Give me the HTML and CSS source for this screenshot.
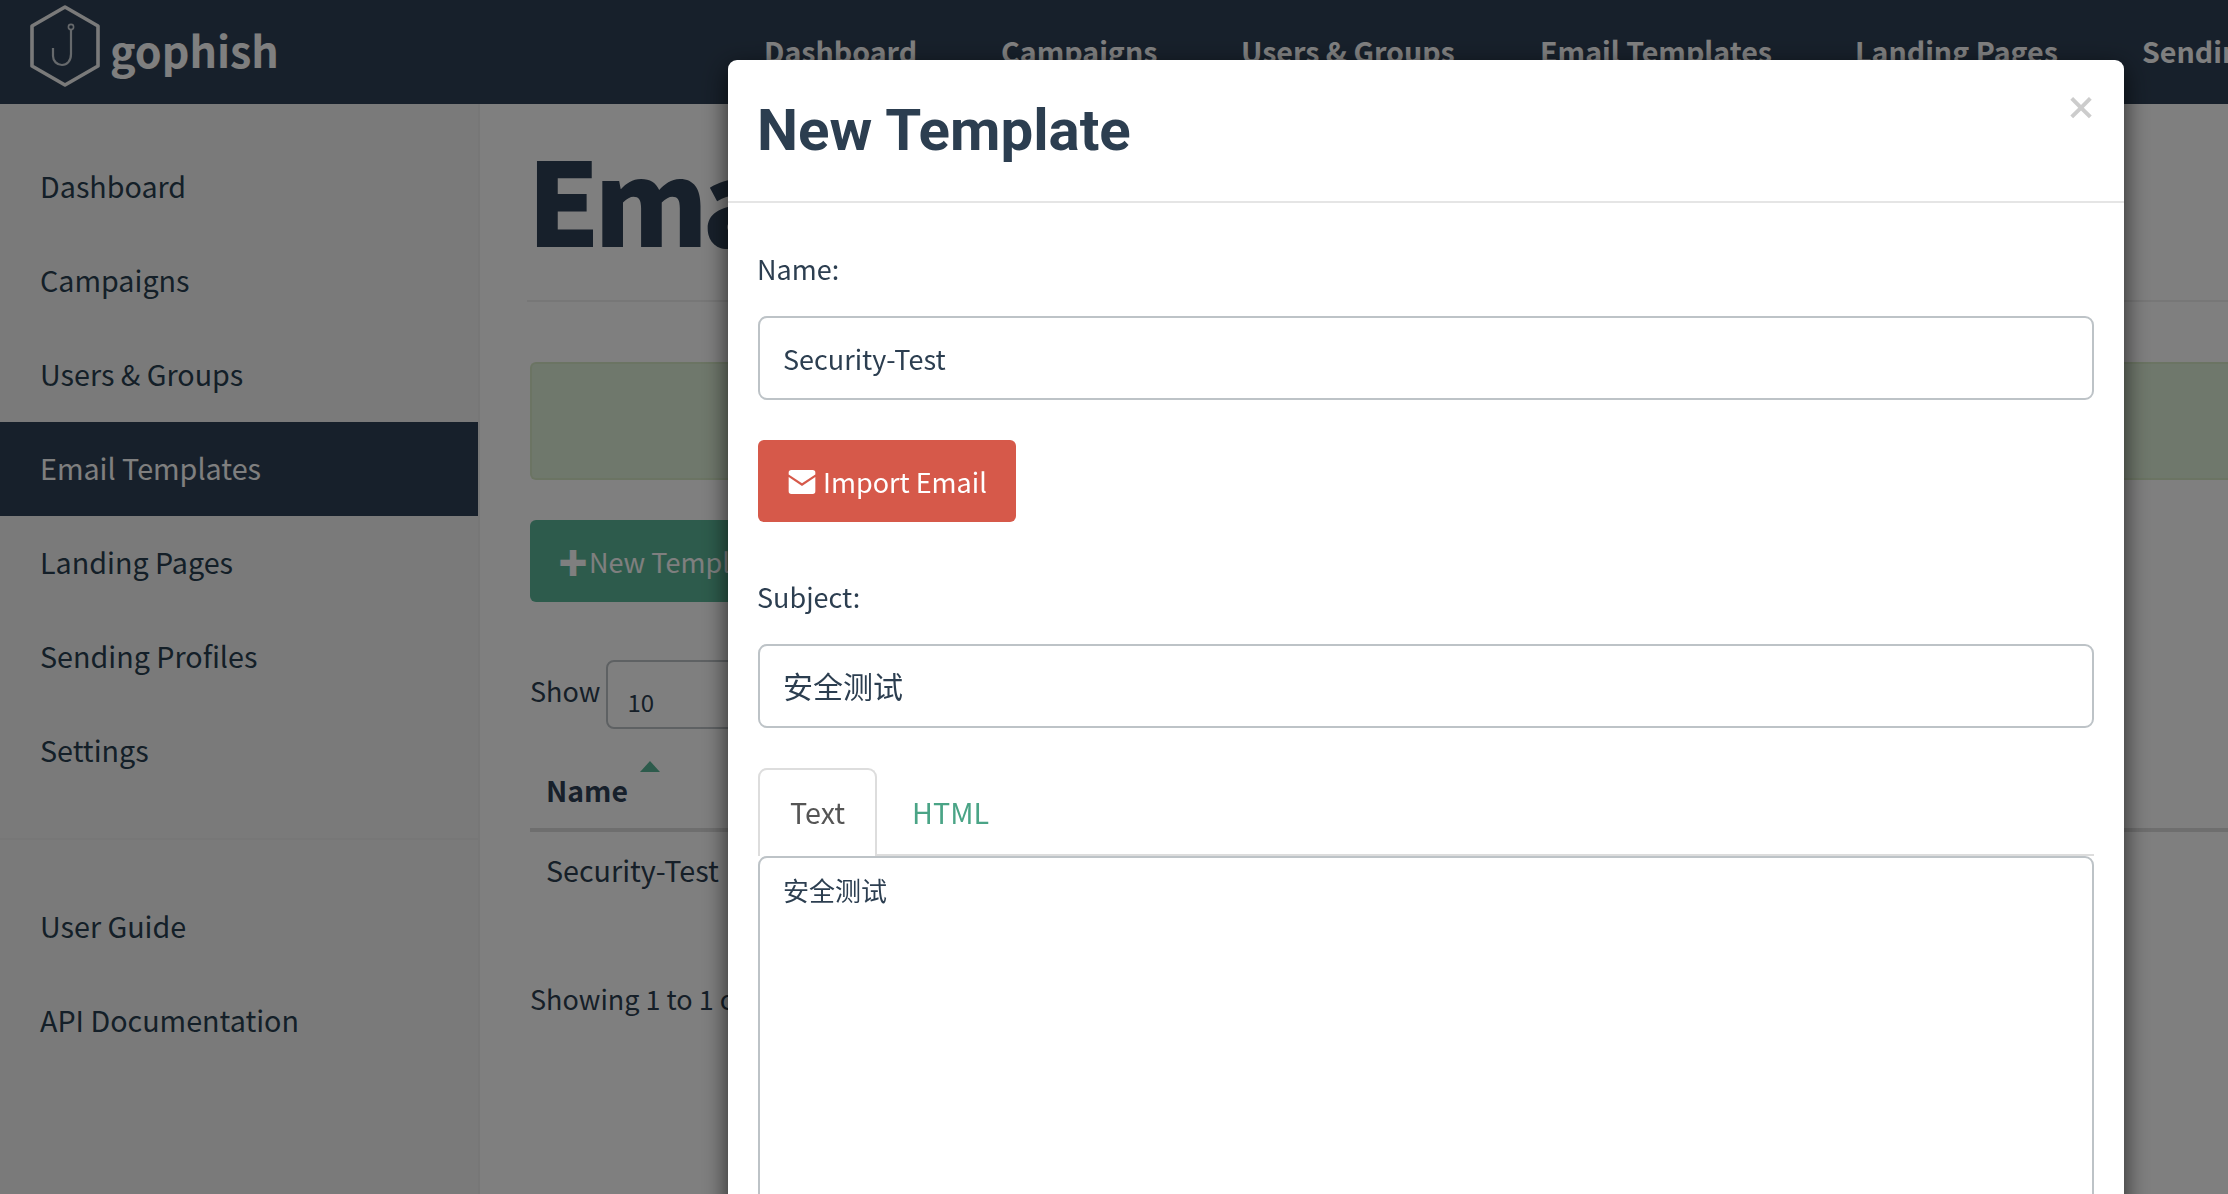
FILE: index.html
```html
<!DOCTYPE html>
<html lang="en">
<head>
<meta charset="utf-8">
<title>Email Templates - gophish</title>
<link rel="stylesheet" href="styles.css">
</head>
<body>
<div class="page">
  <header class="navbar">
    <div class="brand">
      <svg class="brand-logo" viewBox="0 0 72 84" width="72" height="84" aria-hidden="true">
        <path d="M36 3 69 22V62L36 81 3 62V22Z" fill="none" stroke="#f4f4f4" stroke-width="3.6" stroke-linejoin="round"/>
        <circle cx="42" cy="23" r="2.6" fill="none" stroke="#ccd2d8" stroke-width="1.6"/>
        <path d="M42 26V50C42 57 38 61 33 61 28 61 24 57 24 52V44" fill="none" stroke="#ccd2d8" stroke-width="2.2"/>
      </svg>
      <span class="brand-name">gophish</span>
    </div>
    <nav class="topnav">
      <a class="topnav-item nav-1">Dashboard</a>
      <a class="topnav-item nav-2">Campaigns</a>
      <a class="topnav-item nav-3">Users &amp; Groups</a>
      <a class="topnav-item nav-4">Email Templates</a>
      <a class="topnav-item nav-5">Landing Pages</a>
      <a class="topnav-item nav-6">Sending Profiles</a>
    </nav>
  </header>
  <div class="layout">
    <aside class="sidebar">
      <ul class="side-list">
        <li class="side-item">Dashboard</li>
        <li class="side-item">Campaigns</li>
        <li class="side-item">Users &amp; Groups</li>
        <li class="side-item active">Email Templates</li>
        <li class="side-item">Landing Pages</li>
        <li class="side-item">Sending Profiles</li>
        <li class="side-item">Settings</li>
      </ul>
      <hr class="side-rule">
      <ul class="side-list">
        <li class="side-item">User Guide</li>
        <li class="side-item">API Documentation</li>
      </ul>
    </aside>
    <main class="main">
      <h1 class="page-title">Email Templates</h1>
      <div class="alert"></div>
      <button class="btn btn-green"><span class="plus">✚</span>New Template</button>
      <div class="show-row"><span class="show-label">Show</span><span class="select">10</span></div>
      <div class="thead"><span class="sort-arrow"></span><b>Name</b></div>
      <div class="trow">Security-Test</div>
      <div class="showing">Showing 1 to 1 of 1 entries</div>
    </main>
  </div>
</div>
<div class="backdrop"></div>
<section class="modal">
  <div class="modal-head">
    <h2 class="modal-title">New Template</h2>
    <span class="close">×</span>
  </div>
  <div class="modal-body">
    <label class="field-label">Name:</label>
    <div class="input">Security-Test</div>
    <button class="btn btn-red">
      <svg class="env" viewBox="0 0 30 27" width="30" height="24" aria-hidden="true">
        <path d="M3 0H27A3 3 0 0 1 30 3V5L15 15 0 5V3A3 3 0 0 1 3 0Z" fill="#fff"/>
        <path d="M0 8 15 18 30 8V24A3 3 0 0 1 27 27H3A3 3 0 0 1 0 24Z" fill="#fff"/>
      </svg>Import Email</button>
    <label class="field-label subject-label">Subject:</label>
    <div class="input input-cjk">安全测试</div>
    <div class="tabs">
      <span class="tab tab-active">Text</span>
      <span class="tab tab-link">HTML</span>
    </div>
    <div class="textarea">安全测试</div>
  </div>
</section>
</body>
</html>
```
FILE: styles.css
```css
* { box-sizing: border-box; }
html, body { margin: 0; height: 100%; overflow: hidden; }
body {
  font-family: "Noto Sans CJK SC", "Noto Sans", sans-serif;
  font-size: 28.7px;
  color: #2c3e50;
  background: #fff;
}
.page { height: 1194px; overflow: hidden; }
.navbar {
  position: relative;
  height: 104px;
  background: #2f4156;
  overflow: hidden;
}
.brand { display: flex; align-items: center; height: 100%; padding-left: 29px; }
.brand-logo { margin-top: -12px; }
.brand-name { margin-left: 9px; margin-top: -6px; font-size: 43px; font-weight: 700; color: #fff; line-height: 1; }
.topnav-item { position: absolute; top: 28px; font-size: 28.6px; font-weight: 700; color: #fff; line-height: 46px; white-space: nowrap; }
.nav-1 { left: 764px; }
.nav-2 { left: 1001px; }
.nav-3 { left: 1241px; }
.nav-4 { left: 1540px; }
.nav-5 { left: 1855px; }
.nav-6 { left: 2142px; }
.layout { display: flex; height: 1090px; }
.sidebar {
  width: 480px;
  flex: none;
  padding-top: 36px;
  background: #f5f5f5;
  border-right: 2px solid #eee;
}
.side-list { list-style: none; margin: 0; padding: 0; }
.side-item { height: 94px; line-height: 92px; padding-left: 40px; color: #283f50; }
.side-item.active { background: #2f4156; color: #fff; width: 478px; }
.side-rule { margin: 40px 0 40px; border: 0; border-top: 2px solid #eee; }
.main { flex: 1; min-width: 0; padding: 0 0 0 50px; }
.page-title {
  margin: 40px 0 0 -3px;
  height: 158px;
  font-size: 116px;
  letter-spacing: -6px;
  line-height: 104px;
  font-weight: 900;
  color: #2f4156;
  border-bottom: 2px solid #eee;
  white-space: nowrap;
}
.alert { height: 118px; margin-top: 60px; border: 2px solid #d6e9c6; border-right: 0; border-radius: 6px 0 0 6px; background: #dff0d8; }
.btn {
  display: inline-flex;
  align-items: center;
  height: 82px;
  padding: 0 30px;
  border: 0;
  border-radius: 6px;
  font: inherit;
  font-size: 27px;
  color: #fff;
}
.btn-green { margin-top: 40px; padding-left: 28px; background: #5bb798; }
.plus { margin-right: 1px; font-size: 30px; }
.show-row { display: flex; align-items: center; gap: 6px; margin-top: 58px; font-size: 27px; color: #2c3e50; }
.show-label { margin-top: -8px; }
.select {
  display: flex;
  align-items: flex-end;
  width: 200px;
  height: 69px;
  padding: 0 0 8px 19px;
  border: 2px solid #bdc3c7;
  border-radius: 8px;
  font-size: 24px;
}
.thead { position: relative; height: 103px; border-bottom: 4px solid #ddd; padding: 38px 0 0 16px; color: #2f4156; font-size: 28.4px; }
.thead b { font-weight: 700; line-height: 46px; }
.sort-arrow {
  position: absolute;
  left: 110px;
  top: 32px;
  width: 0;
  height: 0;
  border-left: 10px solid transparent;
  border-right: 10px solid transparent;
  border-bottom: 11px solid #5bb798;
}
.trow { height: 120px; padding: 15px 0 0 16px; line-height: 46px; }
.showing { margin-top: 24px; font-size: 27px; line-height: 46px; white-space: nowrap; }
.backdrop { position: fixed; inset: 0; background: rgba(0, 0, 0, .5); }
.modal {
  position: fixed;
  left: 728px;
  top: 60px;
  width: 1396px;
  height: 1400px;
  background: #fff;
  border-radius: 9px 9px 0 0;
  box-shadow: 0 8px 24px rgba(0, 0, 0, .7);
}
.modal-head { position: relative; height: 143px; padding: 37px 30px 0 29px; border-bottom: 2px solid #e5e5e5; }
.modal-title { margin: 0; font-family: Roboto, sans-serif; font-size: 58.2px; line-height: 66px; font-weight: 700; color: #2c3e50; }
.close { position: absolute; right: 27px; top: 28px; font-size: 32px; font-weight: 900; line-height: 36px; color: #ccc; }
.modal-body { padding: 43px 30px 0; font-size: 27px; }
.field-label { display: block; height: 46px; margin-left: -1px; line-height: 46px; }
.input {
  height: 84px;
  margin-top: 24px;
  padding-left: 23px;
  line-height: 82px;
  border: 2px solid #bdc3c7;
  border-radius: 9px;
  background: #fff;
}
.input-cjk { font-size: 30px; line-height: 79px; }
.btn-red { margin-top: 40px; padding: 0 29px; background: #d6594a; }
.env { margin-top: 2px; margin-right: 6px; }
.subject-label { margin-top: 52px; }
.tabs { display: flex; height: 88px; margin-top: 40px; border-bottom: 2px solid #ddd; font-size: 28.7px; }
.tab { height: 88px; padding: 0 30px; line-height: 84px; }
.tab-active { border: 2px solid #ddd; border-bottom: 0; border-radius: 9px 9px 0 0; background: #fff; color: #555; }
.tab-link { padding: 0 35px; line-height: 88px; color: #4aa486; }
.textarea {
  height: 600px;
  padding: 12px 23px;
  font-size: 26px;
  line-height: 40px;
  border: 2px solid #bdc3c7;
  border-radius: 9px;
}
```
